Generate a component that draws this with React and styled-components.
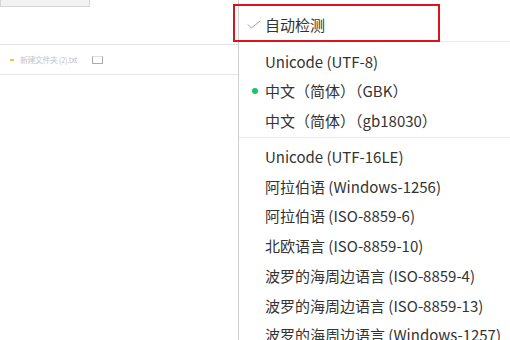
import styled, { createGlobalStyle } from "styled-components";

const GlobalStyle = createGlobalStyle`
  html, body {
    margin: 0;
    padding: 0;
    background: #ffffff;
    overflow: hidden;
  }
  body {
    font-family: "Microsoft YaHei", "Noto Sans CJK SC", "Noto Sans", sans-serif;
  }
`;

const encodings = [
  { label: "Unicode (UTF-8)" },
  { label: "中文（简体）（GBK）", active: true },
  { label: "中文（简体）（gb18030）", divider: true },
  { label: "Unicode (UTF-16LE)" },
  { label: "阿拉伯语 (Windows-1256)" },
  { label: "阿拉伯语 (ISO-8859-6)" },
  { label: "北欧语言 (ISO-8859-10)" },
  { label: "波罗的海周边语言 (ISO-8859-4)" },
  { label: "波罗的海周边语言 (ISO-8859-13)" },
  { label: "波罗的海周边语言 (Windows-1257)" },
];

export default function App() {
  return (
    <>
      <GlobalStyle />
      <Page>
        <TopBar>
          <TabStub />
        </TopBar>
        <FileRow>
          <FolderDot />
          <FileName>新建文件夹 (2).txt</FileName>
          <SmallBox />
        </FileRow>
        <Menu>
          <Item>
            <CheckMark viewBox="0 0 16 10">
              <polyline points="1,5 5,9 15,1" />
            </CheckMark>
            <Label>自动检测</Label>
          </Item>
          <Divider />
          {encodings.map((enc) => (
            <div key={enc.label}>
              <Item>
                {enc.active && <Dot />}
                <Label>{enc.label}</Label>
              </Item>
              {enc.divider && <Divider />}
            </div>
          ))}
          <Highlight />
        </Menu>
      </Page>
    </>
  );
}

const Page = styled.div`
  position: relative;
  width: 510px;
  height: 340px;
  overflow: hidden;
  background: #fff;
`;

const TopBar = styled.div`
  height: 44px;
  border-bottom: 1px solid #e3e3e3;
`;

const TabStub = styled.div`
  width: 88px;
  height: 6px;
  background: #f2f2f2;
  border: 1px solid #d6d6d6;
  border-top: none;
`;

const FileRow = styled.div`
  height: 29px;
  display: flex;
  align-items: center;
  gap: 6px;
  padding-left: 10px;
  border-bottom: 1px solid #e6e6e6;
`;

const FolderDot = styled.span`
  width: 4px;
  height: 2px;
  background: #e8c64a;
`;

const FileName = styled.span`
  font-size: 8px;
  color: #c4c4cc;
  letter-spacing: -0.5px;
  width: 66px;
  white-space: nowrap;
  overflow: hidden;
`;

const SmallBox = styled.span`
  width: 9px;
  height: 6px;
  border: 1px solid #aaa;
  border-top-color: #ddd;
`;

const Menu = styled.div`
  position: absolute;
  top: 0;
  left: 238px;
  right: 0;
  bottom: 0;
  background: #fff;
  border-left: 1px solid #d0d0d0;
  padding-top: 10px;
`;

const Item = styled.div`
  position: relative;
  height: 29.7px;
  display: flex;
  align-items: center;
  padding-left: 26px;
`;

const Label = styled.span`
  font-size: 15px;
  color: #333;
  white-space: nowrap;
`;

const CheckMark = styled.svg`
  position: absolute;
  left: 8px;
  top: 10px;
  width: 14px;
  height: 9px;
  fill: none;
  stroke: #9a9a9a;
  stroke-width: 1.1;
`;

const Dot = styled.span`
  position: absolute;
  left: 13px;
  top: 12px;
  width: 6px;
  height: 6px;
  border-radius: 50%;
  background: #1cc46c;
`;

const Divider = styled.div`
  height: 1px;
  background: #ececec;
  margin: 1.5px 0 4px;
`;

const Highlight = styled.div`
  position: absolute;
  left: -6px;
  top: 4px;
  width: 203px;
  height: 34px;
  border: 2px solid #d7161b;
`;
